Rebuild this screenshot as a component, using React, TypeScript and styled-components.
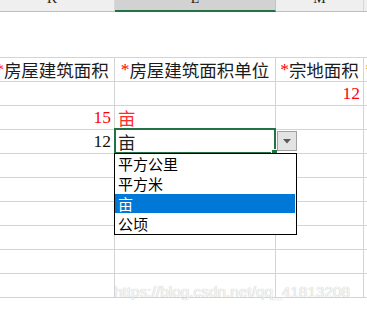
import React from "react";
import styled, { createGlobalStyle } from "styled-components";

const GlobalStyle = createGlobalStyle`
  html, body {
    margin: 0;
    padding: 0;
    background: #ffffff;
    overflow: hidden;
  }
`;

const GRID = "#d4d4d4";
const GREEN = "#217346";

interface Column {
  key: string;
  width: number;
}

const columns: Column[] = [
  { key: "K", width: 125 },
  { key: "L", width: 161 },
  { key: "M", width: 88 },
  { key: "N", width: 60 },
];

type Cell = { text?: string; color?: string; align?: "left" | "right" | "center" };

const headerCells: { star: string; text: string; starColor: string }[] = [
  { star: "*", text: "房屋建筑面积", starColor: "#ff0000" },
  { star: "*", text: "房屋建筑面积单位", starColor: "#ff0000" },
  { star: "*", text: "宗地面积", starColor: "#ff0000" },
  { star: "*", text: "", starColor: "#f5a623" },
];

const dataRows: Cell[][] = [
  [{}, {}, { text: "12", color: "#ff0000", align: "right" }, {}],
  [{ text: "15", color: "#ff0000", align: "right" }, { text: "亩", color: "#ff2a2a", align: "left" }, {}, {}],
  [{ text: "12", color: "#111111", align: "right" }, { text: "亩", color: "#222222", align: "left" }, {}, {}],
  [{}, {}, {}, {}],
  [{}, {}, {}, {}],
  [{}, {}, {}, {}],
  [{}, {}, {}, {}],
  [{}, {}, {}, {}],
  [{}, {}, {}, {}],
];

const options = ["平方公里", "平方米", "亩", "公顷"];

const Sheet = styled.div`
  position: relative;
  width: 367px;
  height: 311px;
  overflow: hidden;
  background: #ffffff;
`;

const Rows = styled.div`
  display: flex;
  flex-direction: column;
  margin-left: -10px;
`;

const HeaderRow = styled.div`
  display: flex;
  height: 12px;
  box-sizing: border-box;
  border-bottom: 1px solid #bfbfbf;
`;

const HeaderCell = styled.div<{ $width: number; $active?: boolean }>`
  flex: 0 0 ${(p) => p.$width}px;
  box-sizing: border-box;
  background: ${(p) => (p.$active ? "#d2d2d2" : "#efefef")};
  border-right: 1px solid ${(p) => (p.$active ? "#c4c4c4" : "#d8d8d8")};
  border-bottom: ${(p) => (p.$active ? `2px solid ${GREEN}` : "none")};
  margin-bottom: ${(p) => (p.$active ? "-1px" : "0")};
  display: flex;
  justify-content: center;
  overflow: hidden;
`;

const HeaderLabel = styled.span`
  font-family: "Liberation Serif", serif;
  font-size: 14px;
  line-height: 14px;
  margin-top: -8px;
  color: #222222;
`;

const Spacer = styled.div`
  height: 46px;
  box-sizing: border-box;
  border-bottom: 1px solid ${GRID};
`;

const Row = styled.div`
  display: flex;
  height: 24px;
  box-sizing: border-box;
  border-bottom: 1px solid ${GRID};
`;

const CellBox = styled.div<{ $width: number; $align: string; $tight?: boolean }>`
  flex: 0 0 ${(p) => p.$width}px;
  box-sizing: border-box;
  border-right: 1px solid ${GRID};
  display: flex;
  align-items: center;
  justify-content: ${(p) =>
    p.$align === "right" ? "flex-end" : p.$align === "left" ? "flex-start" : "center"};
  padding: ${(p) => (p.$tight ? "0 1px" : "0 3px")};
  overflow: hidden;
  white-space: nowrap;
  font-family: "Liberation Serif", "Noto Sans CJK SC", serif;
  font-size: 17.5px;
  color: #1c1c1c;
`;

const Star = styled.span<{ $color: string }>`
  color: ${(p) => p.$color};
`;

const Value = styled.span<{ $color?: string }>`
  color: ${(p) => p.$color || "#1c1c1c"};
`;

const Selection = styled.div`
  position: absolute;
  left: 114px;
  top: 128px;
  width: 162px;
  height: 26px;
  box-sizing: border-box;
  border: 2px solid ${GREEN};
`;

const Handle = styled.div`
  position: absolute;
  right: -4px;
  bottom: -4px;
  width: 5px;
  height: 5px;
  background: ${GREEN};
  border: 1px solid #ffffff;
`;

const DropButton = styled.div`
  position: absolute;
  left: 277px;
  top: 131px;
  width: 20px;
  height: 20px;
  box-sizing: border-box;
  background: #e3e3e3;
  border: 1px solid #a0a0a0;
  display: flex;
  align-items: center;
  justify-content: center;
`;

const DropList = styled.div`
  position: absolute;
  left: 114px;
  top: 153px;
  width: 183px;
  height: 82px;
  box-sizing: border-box;
  border: 1px solid #000000;
  background: #ffffff;
  display: flex;
  flex-direction: column;
`;

const Option = styled.div<{ $selected?: boolean }>`
  height: 19.75px;
  margin-right: 1px;
  display: flex;
  align-items: center;
  padding-left: 3px;
  font-family: "Noto Sans CJK SC", "Noto Sans", sans-serif;
  font-size: 15px;
  background: ${(p) => (p.$selected ? "#0078d7" : "transparent")};
  color: ${(p) => (p.$selected ? "#ffffff" : "#000000")};
`;

const Watermark = styled.div`
  position: absolute;
  left: 114px;
  top: 283px;
  font-family: "Liberation Sans", Arial, sans-serif;
  font-size: 15.4px;
  color: #f6f6f6;
  text-shadow: 0 0 1px #b0b0b0;
  white-space: nowrap;
`;

export default function App() {
  return (
    <Sheet>
      <GlobalStyle />
      <Rows>
        <HeaderRow>
          {columns.map((c) => (
            <HeaderCell key={c.key} $width={c.width} $active={c.key === "L"}>
              <HeaderLabel>{c.key}</HeaderLabel>
            </HeaderCell>
          ))}
        </HeaderRow>
        <Spacer />
        <Row>
          {columns.map((c, i) => (
            <CellBox
              key={c.key}
              $width={c.width}
              $align={i === 3 ? "left" : "center"}
              $tight={i === 3}
            >
              <Star $color={headerCells[i].starColor}>{headerCells[i].star}</Star>
              {headerCells[i].text}
            </CellBox>
          ))}
        </Row>
        {dataRows.map((row, r) => (
          <Row key={r}>
            {columns.map((c, i) => (
              <CellBox key={c.key} $width={c.width} $align={row[i].align || "left"}>
                {row[i].text && <Value $color={row[i].color}>{row[i].text}</Value>}
              </CellBox>
            ))}
          </Row>
        ))}
      </Rows>
      <Selection>
        <Handle />
      </Selection>
      <DropButton>
        <svg width="8" height="5" viewBox="0 0 8 5">
          <path d="M0 0 H8 L4 4.5 Z" fill="#5a5a5a" />
        </svg>
      </DropButton>
      <DropList>
        {options.map((o) => (
          <Option key={o} $selected={o === "亩"}>
            {o}
          </Option>
        ))}
      </DropList>
      <Watermark>https://blog.csdn.net/qq_41813208</Watermark>
    </Sheet>
  );
}
